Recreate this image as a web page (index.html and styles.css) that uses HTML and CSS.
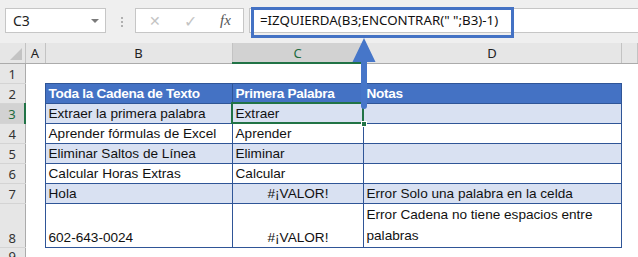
FILE: index.html
```html
<!DOCTYPE html>
<html lang="es">
<head>
  <meta charset="UTF-8" />
  <title>IZQUIERDA - primera palabra</title>
  <link rel="stylesheet" href="styles.css">
</head>
<body>
  <div class="app">
    <div class="toolbar">
      <div class="namebox"><span>C3</span><span class="caret"></span></div>
      <div class="grip"><i></i><i></i><i></i></div>
      <div class="fxbox">
        <span class="cancel">&#x2715;</span>
        <span class="enter">&#x2713;</span>
        <span class="fx">fx</span>
      </div>
      <div class="formula">=IZQUIERDA(B3;ENCONTRAR(" ";B3)-1)</div>
    </div>

    <table class="sheet">
      <colgroup>
        <col style="width:25px"><col style="width:20px"><col style="width:187px">
        <col style="width:131px"><col style="width:258px"><col>
      </colgroup>
      <tr class="colhead">
        <th class="corner"><span class="tri"></span></th>
        <th>A</th><th>B</th><th class="active">C</th><th>D</th><th></th>
      </tr>
      <tr><th class="rowhead">1</th><td></td><td></td><td></td><td></td><td></td></tr>
      <tr class="head">
        <th class="rowhead">2</th><td></td>
        <td class="t">Toda la Cadena de Texto</td><td class="t">Primera Palabra</td><td class="t">Notas</td><td></td>
      </tr>
      <tr class="band">
        <th class="rowhead active">3</th><td></td>
        <td class="t">Extraer la primera palabra</td><td class="t sel">Extraer<span class="handle"></span></td><td class="t"></td><td></td>
      </tr>
      <tr>
        <th class="rowhead">4</th><td></td>
        <td class="t">Aprender fórmulas de Excel</td><td class="t">Aprender</td><td class="t"></td><td></td>
      </tr>
      <tr class="band">
        <th class="rowhead">5</th><td></td>
        <td class="t">Eliminar Saltos de Línea</td><td class="t">Eliminar</td><td class="t"></td><td></td>
      </tr>
      <tr>
        <th class="rowhead">6</th><td></td>
        <td class="t">Calcular Horas Extras</td><td class="t">Calcular</td><td class="t"></td><td></td>
      </tr>
      <tr class="band">
        <th class="rowhead">7</th><td></td>
        <td class="t">Hola</td><td class="t err">#¡VALOR!</td><td class="t">Error Solo una palabra en la celda</td><td></td>
      </tr>
      <tr class="tall">
        <th class="rowhead">8</th><td></td>
        <td class="t">602-643-0024</td><td class="t err">#¡VALOR!</td><td class="t wrap">Error Cadena no tiene espacios entre palabras</td><td></td>
      </tr>
      <tr class="last"><th class="rowhead">9</th><td></td><td></td><td></td><td></td><td></td></tr>
    </table>

    <div class="callout"></div>
    <svg class="arrow" width="24" height="72" viewBox="0 0 24 72">
      <path d="M12 0 L23.5 24 L15 24 L15 68 Q15 71 12 71 Q9 71 9 68 L9 24 L0.5 24 Z" fill="#4676c9"/>
    </svg>
  </div>
</body>
</html>
```

FILE: styles.css
```css
body {
  margin: 0;
  overflow: hidden;
  background: #fff;
}
.app {
  position: relative;
  width: 638px;
  height: 257px;
  overflow: hidden;
  font-family: "Noto Sans", sans-serif;
}

/* formula bar */
.toolbar {
  display: flex;
  align-items: flex-start;
  height: 43px;
  padding: 8px 0 0 5px;
  box-sizing: border-box;
  background: #efefef;
}
.namebox {
  width: 101px;
  height: 25px;
  box-sizing: border-box;
  border: 1px solid #c6c6c6;
  background: #fff;
  display: flex;
  align-items: center;
  justify-content: space-between;
  padding: 0 6px 0 7px;
  font-size: 14px;
  color: #222;
}
.caret {
  width: 0;
  height: 0;
  border-left: 4px solid transparent;
  border-right: 4px solid transparent;
  border-top: 4px solid #7a7a7a;
}
.grip {
  display: flex;
  flex-direction: column;
  gap: 2px;
  margin: 9px 12px 0 15px;
}
.grip i {
  display: block;
  width: 2px;
  height: 2px;
  background: #b0b0b0;
}
.fxbox {
  width: 109px;
  height: 25px;
  box-sizing: border-box;
  border: 1px solid #c6c6c6;
  background: #fff;
  display: flex;
  align-items: center;
  padding: 0 0 0 13px;
  color: #c4c4c4;
  font-size: 14px;
}
.fxbox .enter {
  margin-left: 23px;
  font-size: 16px;
}
.fxbox .fx {
  margin-left: 23px;
  font-family: "Liberation Serif", serif;
  font-style: italic;
  font-size: 15px;
  color: #555;
}
.formula {
  flex: 1;
  height: 25px;
  margin-left: 5px;
  box-sizing: border-box;
  border: 1px solid #c6c6c6;
  border-right: none;
  background: #fff;
  padding: 2px 0 0 10px;
  font-size: 13.3px;
  color: #111;
  white-space: pre;
}

/* grid */
.sheet {
  border-collapse: collapse;
  table-layout: fixed;
  width: 638px;
  font-family: "Liberation Sans", sans-serif;
  font-size: 13.6px;
  color: #111;
}
.sheet th,
.sheet td {
  padding: 0;
  height: 20px;
  box-sizing: border-box;
  white-space: nowrap;
  overflow: visible;
}
.colhead th {
  background: #e6e6e6;
  font-family: "Noto Sans", sans-serif;
  font-weight: normal;
  font-size: 13px;
  color: #222;
  border-right: 1px solid #c3c3c3;
  border-bottom: 1px solid #ababab;
  text-align: center;
}
.colhead th.active {
  background: #d2d2d2;
  color: #1e6b3e;
  border-bottom: 2px solid #217346;
}
.corner {
  position: relative;
}
.tri {
  position: absolute;
  right: 3px;
  bottom: 3px;
  width: 0;
  height: 0;
  border-left: 12px solid transparent;
  border-bottom: 12px solid #c3c3c3;
}
.rowhead {
  background: #e6e6e6;
  font-family: "Noto Sans", sans-serif;
  font-weight: normal;
  font-size: 13px;
  color: #333;
  text-align: center;
  vertical-align: bottom;
  border-right: 1px solid #ababab;
  border-bottom: 1px solid #d4d4d4;
}
.rowhead.active {
  background: #d2d2d2;
  color: #1e6b3e;
  border-right: 2px solid #217346;
}
.last .rowhead {
  vertical-align: top;
  line-height: 16px;
}

.sheet td.t {
  border: 1px solid #2f5597;
  padding: 0 2px 0 3px;
  vertical-align: bottom;
  line-height: 19px;
}
.head td.t {
  background: #4472c4;
  color: #fff;
  font-weight: bold;
  letter-spacing: -0.3px;
}
.band td.t {
  background: #d9e1f2;
}
.sheet td.err {
  text-align: center;
}
.tall td,
.tall th {
  height: 43px;
}
.sheet td.wrap {
  white-space: normal;
  line-height: 21px;
  padding-bottom: 1px;
}

/* selected cell */
.sheet td.sel {
  position: relative;
  outline: 2px solid #217346;
  outline-offset: -1px;
}
.handle {
  position: absolute;
  right: -4px;
  bottom: -4px;
  width: 6px;
  height: 6px;
  background: #217346;
  border: 1px solid #fff;
  box-sizing: border-box;
}

/* annotations */
.callout {
  position: absolute;
  left: 251px;
  top: 7px;
  width: 263px;
  height: 31px;
  box-sizing: border-box;
  border: 3px solid #4472c4;
}
.arrow {
  position: absolute;
  left: 352px;
  top: 38px;
}
```
